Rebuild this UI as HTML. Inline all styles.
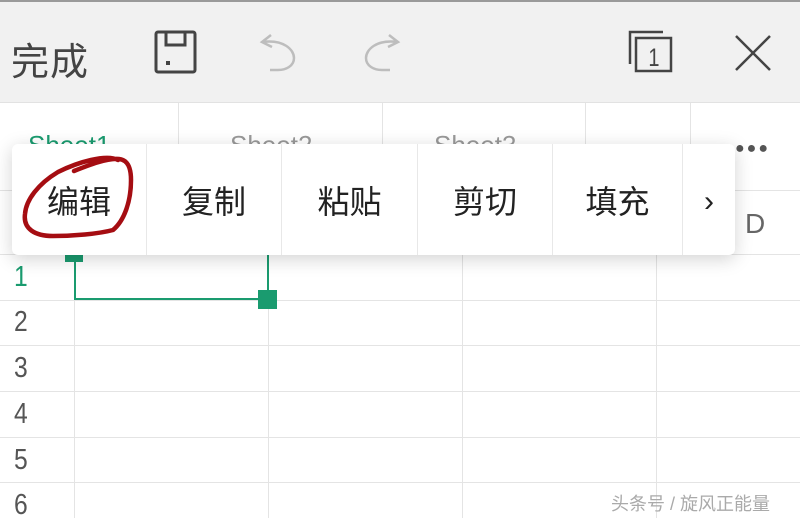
<!DOCTYPE html>
<html><head><meta charset="utf-8"><style>
*{margin:0;padding:0;box-sizing:border-box}
body{width:800px;height:518px;overflow:hidden;background:#fff;font-family:"Liberation Sans","Noto Sans CJK SC",sans-serif;position:relative}
.abs{position:absolute}
.tb{left:0;top:0;width:800px;height:103px;background:#f1f1f1;border-top:2px solid #9a9a9a;border-bottom:1px solid #e2e2e2}
.vl{position:absolute;width:1px;background:#e4e4e4}
.hl{position:absolute;height:1px;background:#e4e4e4;left:0;width:800px}
.rn{position:absolute;left:14px;font-size:29px;color:#555;font-family:"Liberation Sans",sans-serif;transform:scaleX(.85);transform-origin:left}
.menu{left:12px;top:144px;width:723px;height:111px;background:#fff;border-radius:6px;box-shadow:0 4px 18px rgba(0,0,0,.18)}
.it{position:absolute;top:0;height:111px;line-height:116px;text-align:center;font-size:32px;color:#222;border-right:1px solid #e8e8e8}
.g{background:#1a9b6f;position:absolute}
</style></head><body>
<div class="abs tb"></div>
<div class="abs" style="left:11px;top:31px;font-size:38px;color:#444;letter-spacing:1px">完成</div>
<svg class="abs" style="left:0;top:0" width="800" height="103">
<g fill="none" stroke="#444" stroke-width="3">
<rect x="156" y="32" width="39" height="40" rx="2"/>
<path d="M166 32v13h19v-13"/>
</g>
<rect x="166" y="61" width="4" height="4" fill="#444"/>
<g fill="none" stroke="#bdbdbd" stroke-width="2.5">
<path d="M271 35l-9 7 10 5M262 42c22-3 32 8 32 16c0 8-8 12-16 12h-8"/>
<path d="M389 35l9 7-10 5M398 42c-22-3-32 8-32 16c0 8 8 12 16 12h8"/>
</g>
<g fill="none" stroke="#444" stroke-width="2.5">
<path d="M630 64V32h33"/>
<rect x="636" y="38" width="35" height="33"/>
<path d="M736 36l34 34M770 36l-34 34"/>
</g>
<text x="654" y="66" font-size="25" fill="#444" text-anchor="middle" font-family="Liberation Sans" transform="translate(654 0) scale(.8 1) translate(-654 0)">1</text>
</svg>
<!-- tabs row -->
<div class="vl" style="left:178px;top:103px;height:87px"></div>
<div class="vl" style="left:382px;top:103px;height:87px"></div>
<div class="vl" style="left:585px;top:103px;height:87px"></div>
<div class="vl" style="left:690px;top:103px;height:87px"></div>
<div class="abs" style="left:28px;top:130px;font-size:26px;color:#1a9b6f">Sheet1</div>
<div class="abs" style="left:230px;top:130px;font-size:26px;color:#999">Sheet2</div>
<div class="abs" style="left:434px;top:130px;font-size:26px;color:#999">Sheet3</div>
<div class="abs" style="left:735px;top:140px;font-size:16px;color:#555;letter-spacing:2px">●●●</div>
<div class="hl" style="top:190px"></div>
<div class="hl" style="top:254px"></div>
<div class="hl" style="top:300px"></div>
<div class="hl" style="top:345px"></div>
<div class="hl" style="top:391px"></div>
<div class="hl" style="top:437px"></div>
<div class="hl" style="top:482px"></div>
<div class="vl" style="left:74px;top:190px;height:328px"></div>
<div class="vl" style="left:268px;top:190px;height:328px"></div>
<div class="vl" style="left:462px;top:190px;height:328px"></div>
<div class="vl" style="left:656px;top:190px;height:328px"></div>
<div class="abs" style="left:745px;top:208px;font-size:28px;color:#666">D</div>
<div class="rn" style="top:261px;color:#1a9b6f">1</div>
<div class="rn" style="top:306px">2</div>
<div class="rn" style="top:352px">3</div>
<div class="rn" style="top:398px">4</div>
<div class="rn" style="top:444px">5</div>
<div class="rn" style="top:489px">6</div>
<!-- selection -->
<div class="g" style="left:65px;top:254px;width:18px;height:8px"></div>
<div class="g" style="left:74px;top:262px;width:2px;height:38px"></div>
<div class="g" style="left:74px;top:298px;width:186px;height:2px"></div>
<div class="g" style="left:267px;top:254px;width:2px;height:36px"></div>
<div class="g" style="left:258px;top:290px;width:19px;height:19px"></div>
<!-- menu -->
<div class="abs menu">
<div class="it" style="left:0;width:135px">编辑</div>
<div class="it" style="left:135px;width:135px">复制</div>
<div class="it" style="left:270px;width:136px">粘贴</div>
<div class="it" style="left:406px;width:135px">剪切</div>
<div class="it" style="left:541px;width:130px">填充</div>
<div class="it" style="left:671px;width:52px;border-right:none;font-size:30px">›</div>
</div>
<svg class="abs" style="left:0;top:0" width="800" height="518">
<path d="M118 160c-12-6-40 2-60 12c-20 12-32 28-33 42c-2 15 10 22 28 22c20 0 45-2 60-6c12-10 18-30 18-50c0-12-3-20-12-21c-12-1-30 6-45 12" fill="none" stroke="#a50d12" stroke-width="4.5" stroke-linecap="round"/>
</svg>
<div class="abs" style="left:611px;top:490px;font-size:18px;color:#aaa">头条号 / 旋风正能量</div>
</body></html>
